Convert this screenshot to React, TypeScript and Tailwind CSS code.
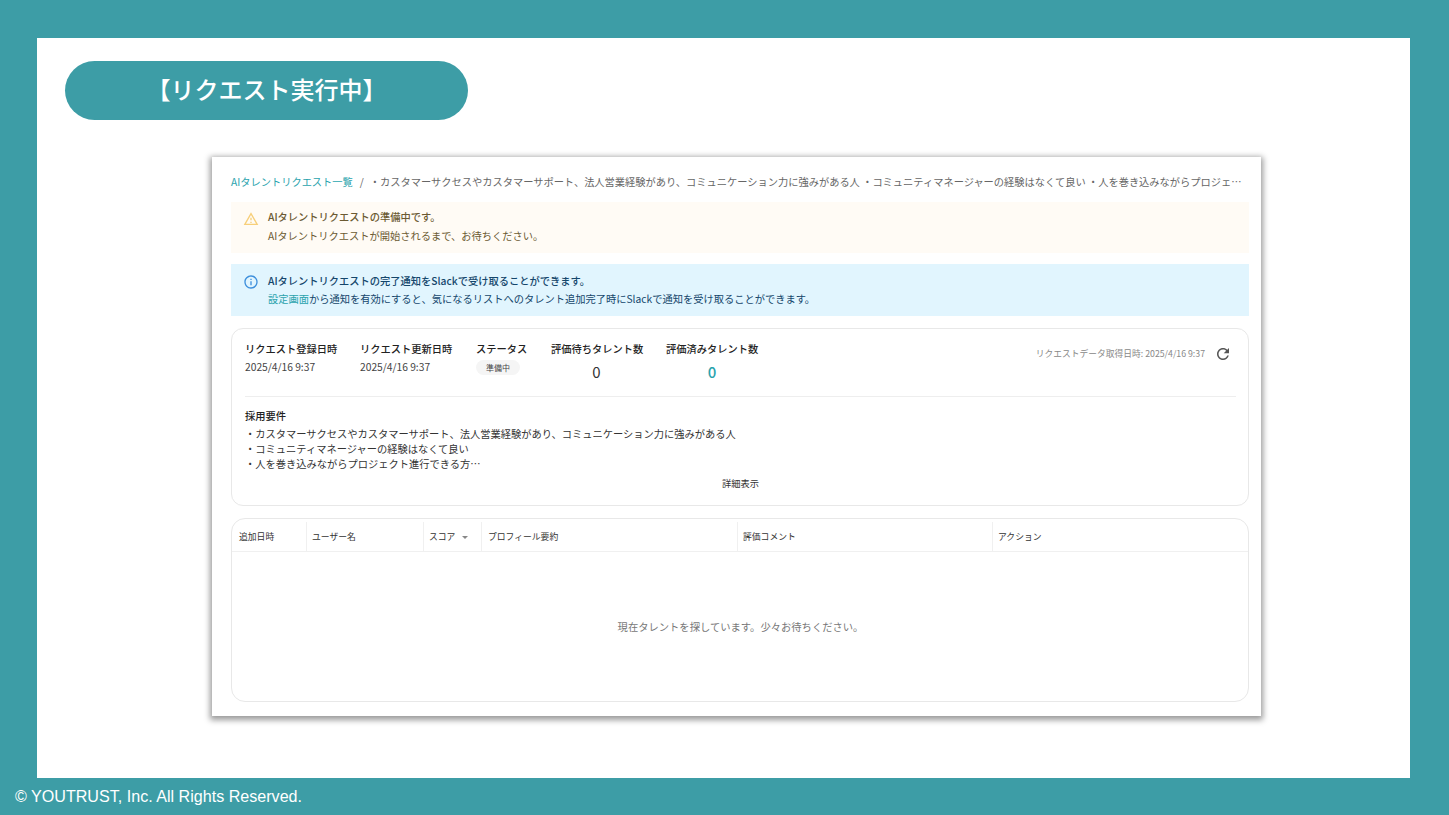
const font = { fontFamily: '"Noto Sans CJK JP", "Noto Sans", sans-serif' };

function Stat({ label, children, className }: { label: string; children: React.ReactNode; className: string }) {
  return (
    <div className={className}>
      <p className="text-[10.25px] leading-[14px] font-medium text-[#222]">{label}</p>
      {children}
    </div>
  );
}

function Th({ className, children }: { className: string; children: React.ReactNode }) {
  return (
    <div className={`flex h-full items-center border-r border-[#f0f0f0] text-[8.8px] text-[#333] ${className}`}>
      {children}
    </div>
  );
}

function Icon({ d, size, className }: { d: string; size: number; className: string }) {
  return (
    <svg className={className} width={size} height={size} viewBox="0 0 24 24" fill="currentColor">
      <path d={d} />
    </svg>
  );
}

export default function App() {
  return (
    <div className="flex h-[815px] w-[1449px] flex-col overflow-hidden bg-[#3d9da6]" style={font}>
      <div className="mt-[38px] ml-[37px] h-[740px] w-[1373px] bg-white pt-[23px] pl-[28px]">
        <div className="flex h-[59px] w-[403px] items-center justify-center rounded-full bg-[#3d9da6] pb-[4px] text-[24px] font-medium text-white">
          【リクエスト実行中】
        </div>
        <div className="mt-[37px] ml-[147px] flex h-[559px] w-[1049px] flex-col bg-white pt-[16px] pr-[12px] pl-[19px] shadow-[0_2px_6px_2px_rgba(0,0,0,0.4)]">
          <div className="flex h-[18px] items-center text-[10.24px] whitespace-nowrap text-[#666]">
            <span className="text-[#2aa3ad]">AIタレントリクエスト一覧</span>
            <span className="mr-[6px] ml-[7px]">/</span>
            <span>
              ・カスタマーサクセスやカスタマーサポート、法人営業経験があり、コミュニケーション力に強みがある人 ・コミュニティマネージャーの経験はなくて良い ・人を巻き込みながらプロジェ…
            </span>
          </div>
          <div className="mt-[11px] flex h-[51px] bg-[#fffbf5] pt-[5px] pl-[12px] text-[10.25px] leading-[19px] text-[#6b5a32]">
            <Icon
              className="mt-[4px] mr-[9px] text-[#f7cf7a]"
              size={16}
              d="M12 5.99 19.53 19H4.47L12 5.99M12 2 1 21h22L12 2zm1 14h-2v2h2v-2zm0-6h-2v4h2v-4z"
            />
            <div>
              <p className="font-medium">AIタレントリクエストの準備中です。</p>
              <p>AIタレントリクエストが開始されるまで、お待ちください。</p>
            </div>
          </div>
          <div className="mt-[11px] flex h-[52px] bg-[#e1f5fe] pt-[8px] pl-[12px] text-[10.25px] leading-[18px] text-[#14466b]">
            <Icon
              className="mt-[2px] mr-[9px] text-[#3d8fdc]"
              size={16}
              d="M11 7h2v2h-2zm0 4h2v6h-2zm1-9C6.48 2 2 6.48 2 12s4.48 10 10 10 10-4.48 10-10S17.52 2 12 2zm0 18c-4.41 0-8-3.59-8-8s3.59-8 8-8 8 3.59 8 8-3.59 8-8 8z"
            />
            <div>
              <p className="font-medium">AIタレントリクエストの完了通知をSlackで受け取ることができます。</p>
              <p>
                <span className="text-[#2aa3ad]">設定画面</span>から通知を有効にすると、気になるリストへのタレント追加完了時にSlackで通知を受け取ることができます。
              </p>
            </div>
          </div>
          <div className="mt-[12px] h-[178px] rounded-[12px] border border-[#e8e8e8] pt-[13px] pr-[12px] pl-[13px]">
            <div className="flex h-[55px] border-b border-[#eeeeee]">
              <Stat label="リクエスト登録日時" className="w-[115px]">
                <p className="mt-[3px] text-[10.25px] text-[#444]">2025/4/16 9:37</p>
              </Stat>
              <Stat label="リクエスト更新日時" className="w-[116px]">
                <p className="mt-[3px] text-[10.25px] text-[#444]">2025/4/16 9:37</p>
              </Stat>
              <Stat label="ステータス" className="w-[75px]">
                <span className="mt-[4px] block w-[44px] rounded-full bg-[#f5f5f5] text-center text-[8px] leading-[15px] text-[#444]">準備中</span>
              </Stat>
              <Stat label="評価待ちタレント数" className="w-[115px]">
                <p className="mt-[6px] pr-[24px] text-center text-[15px] leading-[20px] text-[#333]">0</p>
              </Stat>
              <Stat label="評価済みタレント数" className="w-[120px]">
                <p className="mt-[6px] pr-[28px] text-center text-[15px] leading-[20px] font-medium text-[#2aa3ad]">0</p>
              </Stat>
              <div className="ml-auto flex h-[24px] items-center pr-[4px]">
                <span className="text-[8.75px] text-[#888]">リクエストデータ取得日時: 2025/4/16 9:37</span>
                <Icon
                  className="ml-[9px] text-[#555]"
                  size={18}
                  d="M17.65 6.35C16.2 4.9 14.21 4 12 4c-4.42 0-7.99 3.58-7.99 8s3.57 8 7.99 8c3.73 0 6.84-2.55 7.73-6h-2.08c-.82 2.33-3.04 4-5.65 4-3.31 0-6-2.69-6-6s2.69-6 6-6c1.66 0 3.14.69 4.22 1.78L13 11h7V4l-2.35 2.35z"
                />
              </div>
            </div>
            <p className="mt-[11px] text-[10.25px] leading-[15px] font-medium text-[#222]">採用要件</p>
            <div className="mt-[3px] text-[10.25px] leading-[15px] text-[#333]">
              <p>・カスタマーサクセスやカスタマーサポート、法人営業経験があり、コミュニケーション力に強みがある人</p>
              <p>・コミュニティマネージャーの経験はなくて良い</p>
              <p>・人を巻き込みながらプロジェクト進行できる方…</p>
            </div>
            <p className="mt-[5px] text-center text-[9.25px] leading-[14px] text-[#333]">詳細表示</p>
          </div>
          <div className="mt-[12px] flex h-[184px] flex-col rounded-[14px] border border-[#e8e8e8]">
            <div className="flex h-[33px] items-center border-b border-[#f0f0f0] pt-[3px]">
              <Th className="w-[75px] pl-[7px]">追加日時</Th>
              <Th className="w-[117px] pl-[5px]">ユーザー名</Th>
              <Th className="w-[58px] pl-[5px]">
                スコア
                <svg className="ml-[6px]" width="8" height="8" viewBox="0 0 8 8"><path d="M1 3h6L4 6z" fill="#888" /></svg>
              </Th>
              <Th className="w-[256px] pl-[6px]">プロフィール要約</Th>
              <Th className="w-[255px] pl-[5px]">評価コメント</Th>
              <div className="pl-[5px] text-[8.8px] text-[#333]">アクション</div>
            </div>
            <div className="flex flex-1 items-center justify-center pl-px text-[10.3px] text-[#777]">
              現在タレントを探しています。少々お待ちください。
            </div>
          </div>
        </div>
      </div>
      <p className="mt-[8px] ml-[15px] text-[16.1px] leading-[20px] text-white" style={{ fontFamily: '"Liberation Sans", sans-serif' }}>
        © YOUTRUST, Inc. All Rights Reserved.
      </p>
    </div>
  );
}
